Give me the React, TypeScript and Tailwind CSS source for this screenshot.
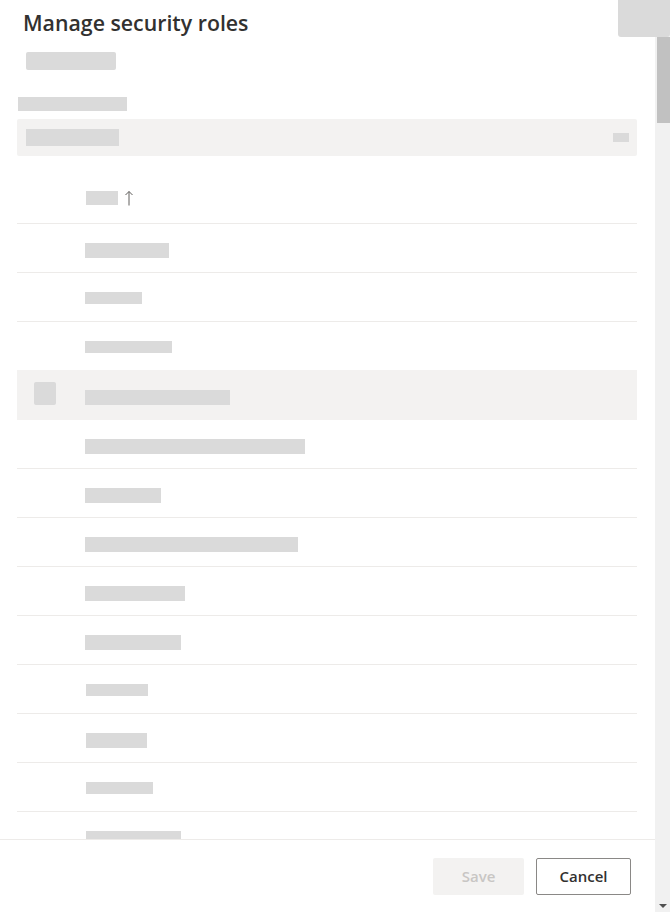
import React from "react";

type Row = { w: number; h: number; x?: number; selected?: boolean };

const rows: Row[] = [
  { w: 84, h: 15 },
  { w: 57, h: 12 },
  { w: 87, h: 12 },
  { w: 145, h: 15, selected: true },
  { w: 220, h: 15 },
  { w: 76, h: 15 },
  { w: 213, h: 15 },
  { w: 100, h: 15 },
  { w: 96, h: 15 },
  { w: 62, h: 12, x: 1 },
  { w: 61, h: 15, x: 1 },
  { w: 67, h: 12, x: 1 },
  { w: 95, h: 15, x: 1 },
];

function Bar({ w, h, className = "" }: { w: number; h: number; className?: string }) {
  // skeleton placeholder, size comes from data
  return <div className={"bg-[#dadada] shrink-0 " + className} style={{ width: w, height: h }} />;
}

function SortArrow() {
  return (
    <svg width="10" height="16" viewBox="0 0 10 16" className="ml-[6px] -mt-[1px]" fill="none" stroke="#605e5c" strokeWidth="1">
      <path d="M5 1.5V15.5" />
      <path d="M1.5 5L5 1.5L8.5 5" />
    </svg>
  );
}

export default function App() {
  return (
    <div className="relative flex w-[670px] h-[912px] overflow-hidden bg-white" style={{ fontFamily: '"Open Sans", "Liberation Sans", sans-serif' }}>
      <div className="flex flex-col w-[655px] h-full">
        {/* panel body */}
        <div className="flex-1 overflow-hidden">
          <h1 className="pt-[8px] pl-[23px] text-[21.3px] font-semibold leading-[30px] text-[#323130]">
            Manage security roles
          </h1>
          <div className="mt-[14px] ml-[26px] w-[90px] h-[18px] rounded-[2px] bg-[#dadada]" />

          <div className="mt-[27px] ml-[18px] w-[109px] h-[14px] bg-[#dadada]" />
          <div className="mt-[8px] ml-[17px] w-[620px] h-[37px] rounded-[2px] bg-[#f3f2f1] flex items-center justify-between pl-[9px] pr-[8px]">
            <div className="w-[93px] h-[17px] bg-[#dadada]" />
            <div className="w-[16px] h-[9px] bg-[#dadada]" />
          </div>

          {/* list header */}
          <div className="ml-[17px] w-[620px] h-[68px] border-b border-[#edebe9] flex items-start pt-[35px] pl-[69px]">
            <div className="w-[32px] h-[14px] bg-[#dadada]" />
            <SortArrow />
          </div>

          {rows.map((r, i) => (
            <div
              key={i}
              className={
                "ml-[17px] w-[620px] flex border-b " +
                (r.selected ? "bg-[#f3f2f1] border-[#f3f2f1] -mt-[1px] h-[50px]" : "h-[49px] border-[#edebe9]")
              }
            >
              <div className="w-[68px] shrink-0 pl-[17px] pt-[12px]">
                {r.selected && <div className="w-[22px] h-[23px] rounded-[2px] bg-[#dadada]" />}
              </div>
              <div className={"pt-[19px] " + (r.x ? "pl-[1px] " : "") + (r.selected ? "mt-[1px]" : "")}>
                <Bar w={r.w} h={r.h} />
              </div>
            </div>
          ))}
        </div>

        {/* footer */}
        <div className="h-[73px] shrink-0 border-t border-[#edebe9] flex justify-end items-start pt-[18px] pr-[24px] gap-[12px]">
          <button className="w-[91px] h-[37px] rounded-[2px] bg-[#f3f2f1] text-[15px] font-semibold text-[#c8c6c4]">
            Save
          </button>
          <button className="w-[95px] h-[37px] rounded-[2px] border border-[#8a8886] bg-white text-[15px] font-semibold text-[#323130]">
            Cancel
          </button>
        </div>
      </div>

      {/* scrollbar */}
      <div className="w-[15px] h-full bg-[#f1f1f1] flex flex-col justify-between">
        <div className="mt-[37px] ml-[2px] h-[86px] bg-[#c1c1c1]" />
        <div className="flex justify-center pb-[4px] pl-[1px]">
          <div className="w-0 h-0 border-l-[4px] border-r-[4px] border-t-[4px] border-l-transparent border-r-transparent border-t-[#505050]" />
        </div>
      </div>

      {/* close button area */}
      <div className="absolute top-0 right-0 w-[52px] h-[37px] rounded-b-[3px] bg-[#dadada]" />
    </div>
  );
}
